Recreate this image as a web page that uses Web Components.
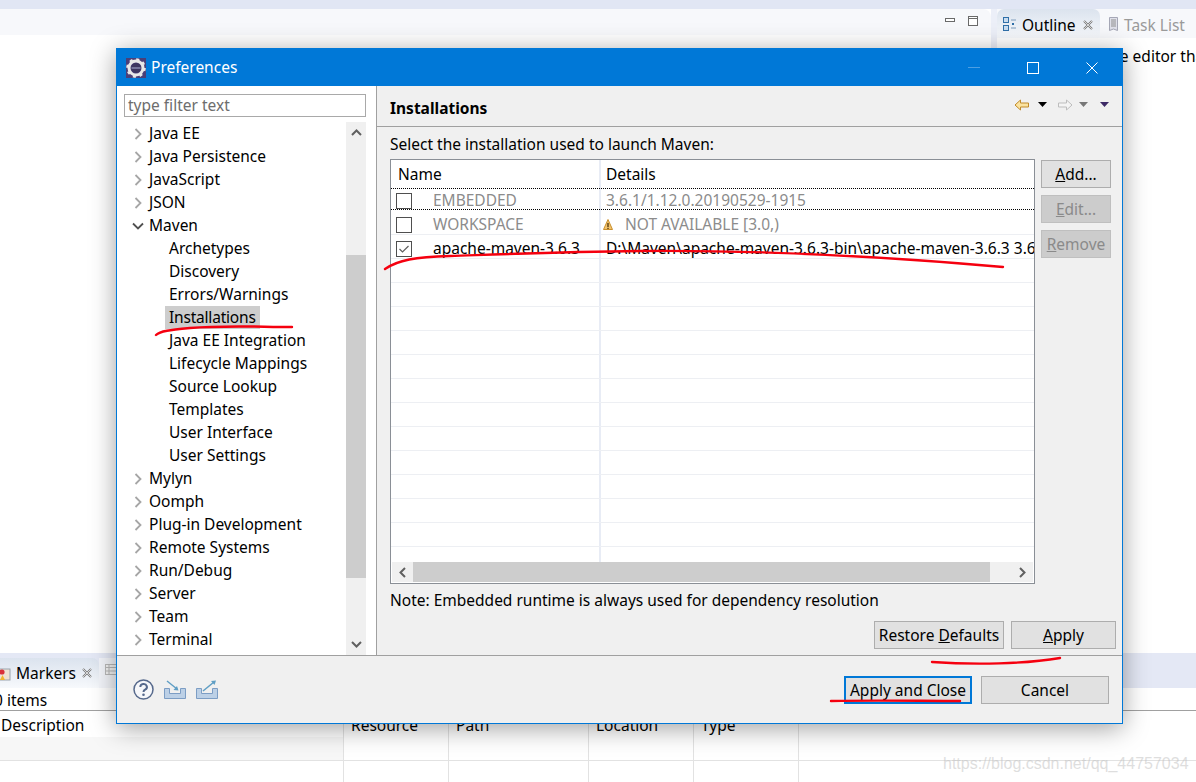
<!DOCTYPE html>
<html>
<head>
<meta charset="utf-8">
<title>Preferences</title>
<style>
  html, body { margin: 0; height: 100%; overflow: hidden; background: #fff; }
  body { font-family: "Noto Sans", "Open Sans", sans-serif; font-size: 15.5px; color: #000; }
</style>
</head>
<body>

<work-bench>
  <pref-dialog>
    <tree-item slot="tree" kind="closed">Java EE</tree-item>
    <tree-item slot="tree" kind="closed">Java Persistence</tree-item>
    <tree-item slot="tree" kind="closed">JavaScript</tree-item>
    <tree-item slot="tree" kind="closed">JSON</tree-item>
    <tree-item slot="tree" kind="open">Maven</tree-item>
    <tree-item slot="tree" kind="child">Archetypes</tree-item>
    <tree-item slot="tree" kind="child">Discovery</tree-item>
    <tree-item slot="tree" kind="child">Errors/Warnings</tree-item>
    <tree-item slot="tree" kind="child" selected>Installations</tree-item>
    <tree-item slot="tree" kind="child">Java EE Integration</tree-item>
    <tree-item slot="tree" kind="child">Lifecycle Mappings</tree-item>
    <tree-item slot="tree" kind="child">Source Lookup</tree-item>
    <tree-item slot="tree" kind="child">Templates</tree-item>
    <tree-item slot="tree" kind="child">User Interface</tree-item>
    <tree-item slot="tree" kind="child">User Settings</tree-item>
    <tree-item slot="tree" kind="closed">Mylyn</tree-item>
    <tree-item slot="tree" kind="closed">Oomph</tree-item>
    <tree-item slot="tree" kind="closed">Plug-in Development</tree-item>
    <tree-item slot="tree" kind="closed">Remote Systems</tree-item>
    <tree-item slot="tree" kind="closed">Run/Debug</tree-item>
    <tree-item slot="tree" kind="closed">Server</tree-item>
    <tree-item slot="tree" kind="closed">Team</tree-item>
    <tree-item slot="tree" kind="closed">Terminal</tree-item>

    <install-table slot="table"></install-table>

    <swt-button slot="side"><u>A</u>dd...</swt-button>
    <swt-button slot="side" disabled><u>E</u>dit...</swt-button>
    <swt-button slot="side" disabled><u>R</u>emove</swt-button>

    <swt-button slot="restore" style="width:130px">Restore <u>D</u>efaults</swt-button>
    <swt-button slot="restore" style="width:105px"><u>A</u>pply</swt-button>

    <swt-button slot="footer" style="width:128px" focused>Apply and Close</swt-button>
    <swt-button slot="footer" style="width:128px">Cancel</swt-button>
  </pref-dialog>
</work-bench>

<script>
class WorkBench extends HTMLElement {
    constructor() {
        super();
        this.attachShadow({ mode: 'open' });
        this.shadowRoot.innerHTML = `
        <style>
          :host { display: block; position: relative; width: 1196px; height: 782px; overflow: hidden; background: #fff; }
          .page { display: flex; flex-direction: column; height: 100%; }
          .band { height: 9px; background: #e1e6f4; flex: none; }
          .upper { flex: 1; display: flex; min-height: 0; background: #fff; }
          .editor { width: 991px; flex: none; }
          .editor-bar { height: 26px; background: #f7f8fb; border-radius: 0 8px 0 0; display: flex; justify-content: flex-end; align-items: center; gap: 12px; padding: 0 12px 2px 0; box-sizing: border-box; }
          .gutter { width: 6px; flex: none; background: #eceff8; height: 100%; }
          .outline { flex: 1; min-width: 0; }
          .tabs { height: 29px; display: flex; background: #f7f8fb; }
          .tab { display: flex; align-items: center; gap: 5px; padding: 2px 7px 0 6px; white-space: nowrap; }
          .tab.on { background: linear-gradient(#dbe3ee, #f7f9fc); border-radius: 7px 7px 0 0; width: 103px; box-sizing: border-box; flex: none; }
          .tab.off { color: #9a9a9a; padding-left: 8px; }
          .msg { padding: 7px 0 0 5px; white-space: nowrap; overflow: hidden; }
          .lower { height: 129px; flex: none; background: #fff; }
          .low-tabs { height: 35px; box-sizing: border-box; padding-top: 5px; display: flex; background: #e4e8f5; }
          .low-tab { width: 99px; background: linear-gradient(#dbe3ee, #f7f9fc); border-radius: 0 7px 0 0; display: flex; align-items: center; gap: 5px; box-sizing: border-box; }
          .low-other { width: 40px; padding: 6px 0 0 6px; background: #f3f5fa; }
          .count { height: 23px; line-height: 25px; box-sizing: border-box; border-bottom: 1px solid #a0a0a0; white-space: nowrap; overflow: hidden; margin-left: -6px; }
          .cols { display: grid; grid-template-columns: 344px 105px 140px 105px 105px 1fr; }
          .cols div { height: 26px; line-height: 29px; border-right: 1px solid #e2e2e2; padding-left: 7px; box-sizing: border-box; }
          .cols .row { height: 24px; background: #fff; border-bottom: 1px solid #e2e2e2; }
          .cols .tail { height: 22px; border-bottom: 0; }
          .cols .first { padding-left: 1px; }
          .cols .grey { background: #f7f7f7; }
          .wm { position: absolute; left: 943px; top: 755px; font: 16px "Liberation Sans", sans-serif; color: rgba(190,190,190,.5); white-space: nowrap; }
          .dlg { position: absolute; left: 116px; top: 48px; }
          svg { display: block; flex: none; }
        </style>
        <div class="page">
          <div class="band"></div>
          <div class="upper">
            <div class="editor">
              <div class="editor-bar">
                <svg width="11" height="10" viewBox="0 0 11 10"><rect x="0.5" y="2.5" width="9" height="3" fill="#fff" stroke="#6a6a6a"/></svg>
                <svg width="11" height="11" viewBox="0 0 11 11"><rect x="0.5" y="0.5" width="9" height="9" fill="#fff" stroke="#6a6a6a"/><path d="M0 2.5h10" stroke="#6a6a6a"/></svg>
              </div>
            </div>
            <div class="gutter"></div>
            <div class="outline">
              <div class="tabs">
                <div class="tab on">
                  <svg width="14" height="15" viewBox="0 0 14 15" fill="none"><rect x="0.5" y="0.5" width="5" height="5" fill="#c9dcef" stroke="#2f6fa8"/><rect x="0.500" y="8.500" width="5" height="5" fill="#c9dcef" stroke="#2f6fa8"/><path d="M8 3h5M8 11h5" stroke="#7c9cbc"/><rect x="9" y="6" width="2" height="2" fill="#2f6fa8"/></svg>
                  <span>Outline</span>
                  <svg width="10" height="10" viewBox="0 0 10 10" style="margin-left:2px"><path d="M1 1l8 8M9 1l-8 8" stroke="#777" stroke-width="2"/><path d="M1 1l8 8M9 1l-8 8" stroke="#fff" stroke-width=".7"/></svg>
                </div>
                <div class="tab off">
                  <svg width="11" height="15" viewBox="0 0 11 15"><path d="M1.500 .5h8v13l-4-1.500-4 1.500z" fill="#dfe0ea" stroke="#a5a7b6"/><path d="M3 3h5M3 5h5M3 7h5M3 9h5" stroke="#8f8f8f"/></svg>
                  <span>Task List</span>
                </div>
              </div>
              <div class="msg">There is no active editor that provides an outline.</div>
            </div>
          </div>
          <div class="lower">
            <div class="low-tabs">
              <div class="low-tab">
                <svg width="11" height="15" viewBox="0 0 11 15"><rect x="-1" y="3" width="11" height="11" fill="#efe3d3" stroke="#9aa3ad"/><circle cx="2" cy="6" r="2.600" fill="#d9323a"/><path d="M0 14l2.500-5 2.500 5z" fill="#f2b632"/></svg>
                <span>Markers</span>
                <svg width="10" height="10" viewBox="0 0 10 10" style="margin-left:1px"><path d="M1 1l8 8M9 1l-8 8" stroke="#777" stroke-width="2"/><path d="M1 1l8 8M9 1l-8 8" stroke="#fff" stroke-width=".7"/></svg>
              </div>
              <div class="low-other"><svg width="12" height="11" viewBox="0 0 12 11"><rect x=".5" y=".5" width="11" height="10" fill="#f4f4f4" stroke="#b9b9b9"/><path d="M0 3.500h12M0 7h12M4 0v11" stroke="#b9b9b9"/></svg></div>
            </div>
            <div class="count">0 items</div>
            <div class="cols">
              <div class="first">Description</div><div>Resource</div><div>Path</div><div>Location</div><div>Type</div><div style="border-right:0"></div>
              <div class="row grey"></div><div class="row"></div><div class="row"></div><div class="row"></div><div class="row"></div><div class="row" style="border-right:0"></div>
              <div class="row tail"></div><div class="row tail"></div><div class="row tail"></div><div class="row tail"></div><div class="row tail"></div><div class="row tail" style="border-right:0"></div>
            </div>
          </div>
        </div>
        <div class="dlg"><slot></slot></div>
        <div class="wm">https://blog.csdn.net/qq_44757034</div>
        `;
    }
}

class PrefDialog extends HTMLElement {
    constructor() {
        super();
        this.attachShadow({ mode: 'open' });
        this.shadowRoot.innerHTML = `
        <style>
          :host { display: block; position: relative; width: 1007px; height: 676px; box-sizing: border-box; border: 1px solid #0078d7; background: #f0f0f0; box-shadow: 0 4px 24px rgba(0,0,0,.38); }
          .frame { display: flex; flex-direction: column; height: 100%; }
          .title { height: 37px; flex: none; background: #0078d7; color: #fff; display: flex; align-items: center; padding-left: 9px; gap: 5px; }
          .title span { flex: 1; margin-top: -2px; }
          .wbtns { display: flex; height: 100%; margin-right: 1px; }
          .wbtns div { width: 59px; display: flex; align-items: center; justify-content: center; }
          .main { flex: 1; display: flex; min-height: 0; }
          .left { width: 259px; flex: none; background: #fff; border-right: 1px solid #a0a0a0; display: flex; flex-direction: column; }
          .filter { height: 23px; margin: 8px 10px 5px 7px; flex: none; box-sizing: border-box; border: 1px solid #a9a9a9; padding-left: 3px; line-height: 21px; color: #6d6d6d; }
          .tree-wrap { flex: 1; display: flex; min-height: 0; padding-right: 10px; }
          .tree { flex: 1; min-width: 0; overflow: hidden; }
          .vbar { width: 20px; flex: none; background: #f0f0f0; display: flex; flex-direction: column; align-items: center; }
          .vbar .thumb { width: 100%; height: 323px; background: #cdcdcd; margin: 112px 0 0; }
          .vbar .up { height: 21px; display: flex; align-items: center; justify-content: center; }
          .vbar .down { margin-top: auto; height: 22px; display: flex; align-items: center; justify-content: center; }
          .right { flex: 1; min-width: 0; display: flex; flex-direction: column; }
          .head { height: 41px; flex: none; border-bottom: 1px solid #a0a0a0; box-sizing: border-box; display: flex; align-items: center; padding: 3px 12px 0 13px; }
          .head b { flex: 1; font-weight: 700; }
          .nav { display: flex; align-items: center; margin-top: -6px; }
          .content { flex: 1; padding: 5px 6px 6px 13px; display: flex; flex-direction: column; min-height: 0; }
          .label { height: 27px; line-height: 25px; flex: none; }
          .tbl { display: flex; gap: 6px; height: 425px; flex: none; }
          .side { display: flex; flex-direction: column; gap: 7px; width: 70px; padding-top: 1px; }
          ::slotted(swt-button[slot=side]) { width: 70px; }
          .note { height: 33px; line-height: 32px; flex: none; }
          .restore { display: flex; justify-content: flex-end; gap: 7px; margin-top: 4px; }
          .foot { height: 68px; flex: none; border-top: 1px solid #a0a0a0; box-sizing: border-box; display: flex; align-items: flex-start; padding: 20px 13px 0 16px; }
          .icons { display: flex; gap: 10px; align-items: center; flex: 1; margin-top: 3px; }
          .foot-btns { display: flex; gap: 9px; }
          .ink { position: absolute; left: -117px; top: -49px; width: 1196px; height: 782px; pointer-events: none; overflow: visible; }
          svg { display: block; flex: none; }
        </style>
        <div class="frame">
          <div class="title">
            <svg width="20" height="20" viewBox="0 0 20 20">
              <rect width="20" height="20" fill="#4a3f78"/>
              <circle cx="10" cy="10" r="7" fill="none" stroke="#e8e8e8" stroke-width="3"/>
              <circle cx="10" cy="10" r="8.600" fill="none" stroke="#e8e8e8" stroke-width="2.400" stroke-dasharray="3 3.750"/>
              <circle cx="10" cy="10" r="5" fill="#3e3560"/>
              <path d="M5.500 10h9" stroke="#8f8fb5" stroke-width="1.400"/>
            </svg>
            <span>Preferences</span>
            <div class="wbtns">
              <div><svg width="12" height="2"><rect width="12" height="1" fill="#4d9fe3"/></svg></div>
              <div><svg width="12" height="12"><rect x=".5" y=".5" width="11" height="11" fill="none" stroke="#fff"/></svg></div>
              <div><svg width="12" height="12"><path d="M.5.5l11 11M11.500.5l-11 11" stroke="#fff" fill="none"/></svg></div>
            </div>
          </div>
          <div class="main">
            <div class="left">
              <div class="filter">type filter text</div>
              <div class="tree-wrap">
                <div class="tree"><slot name="tree"></slot></div>
                <div class="vbar">
                  <div class="up"><svg width="11" height="7" viewBox="0 0 11 7"><path d="M1 6l4.500-4.500L10 6" fill="none" stroke="#606060" stroke-width="2"/></svg></div>
                  <div class="thumb"></div>
                  <div class="down"><svg width="11" height="7" viewBox="0 0 11 7"><path d="M1 1l4.500 4.500L10 1" fill="none" stroke="#606060" stroke-width="2"/></svg></div>
                </div>
              </div>
            </div>
            <div class="right">
              <div class="head">
                <b>Installations</b>
                <div class="nav">
                  <svg width="16" height="12" viewBox="0 0 16 12"><path d="M1 6l5.500-5v3h8v4h-8v3z" fill="#fbe3a0" stroke="#c08a2a"/></svg>
                  <svg width="10" height="5" viewBox="0 0 10 5" style="margin-left:8px"><path d="M0 0h9L4.500 5z" fill="#000"/></svg>
                  <svg width="16" height="12" viewBox="0 0 16 12" style="margin-left:9px"><path d="M15 6L9.500 1v3h-8v4h8v3z" fill="#f4f4f4" stroke="#bdbdbd"/></svg>
                  <svg width="10" height="5" viewBox="0 0 10 5" style="margin-left:6px"><path d="M0 0h9L4.500 5z" fill="#777"/></svg>
                  <svg width="10" height="5" viewBox="0 0 10 5" style="margin-left:11px"><path d="M0 0h9L4.500 5z" fill="#3d2a66"/></svg>
                </div>
              </div>
              <div class="content">
                <div class="label">Select the installation used to launch Maven:</div>
                <div class="tbl">
                  <slot name="table"></slot>
                  <div class="side"><slot name="side"></slot></div>
                </div>
                <div class="note">Note: Embedded runtime is always used for dependency resolution</div>
                <div class="restore"><slot name="restore"></slot></div>
              </div>
            </div>
          </div>
          <div class="foot">
            <div class="icons">
              <svg width="21" height="21" viewBox="0 0 21 21"><circle cx="10.500" cy="10.500" r="9.500" fill="#f6f7fa" stroke="#56698c" stroke-width="1.500"/><path d="M7.300 8a3.300 3 0 1 1 4.800 2.700c-1.100.6-1.600 1.100-1.600 2.300" fill="none" stroke="#56698c" stroke-width="2"/><circle cx="10.500" cy="15.800" r="1.300" fill="#56698c"/></svg>
              <svg width="22" height="19" viewBox="0 0 22 19"><path d="M.5 8.500h5v5h11v-5h5v10H.5z" fill="#bcd0e6" stroke="#7c9dc4"/><path d="M3 1l10 8" stroke="#5f9ec4" stroke-width="1.500"/><path d="M14.500 10.500l-5-.5 3.500-4z" fill="#5f9ec4"/></svg>
              <svg width="22" height="19" viewBox="0 0 22 19"><path d="M.5 8.500h5v5h11v-5h5v10H.5z" fill="#bcd0e6" stroke="#7c9dc4"/><path d="M7 11L18 2" stroke="#5f9ec4" stroke-width="1.500"/><path d="M20 .5l-5 .5 3.500 4z" fill="#5f9ec4"/></svg>
            </div>
            <div class="foot-btns"><slot name="footer"></slot></div>
          </div>
        </div>
        <svg class="ink" viewBox="0 0 1196 782" fill="none" stroke="#f5000f" stroke-linecap="round">
          <path d="M385 269C398 260 415 257 450 256 510 254 560 252 640 251 760 250 880 256 1003 267" stroke-width="2.400"/>
          <path d="M156 335C160 331 170 330 190 328 225 325 260 327 292 327" stroke-width="2.400"/>
          <path d="M932 662C975 665 1025 664 1060 658" stroke-width="2.400"/>
          <path d="M831 701C880 700 920 701 960 701" stroke-width="2.400"/>
        </svg>
        `;
    }
}

class TreeItem extends HTMLElement {
    constructor() {
        super();
        this.attachShadow({ mode: 'open' });
    }
    connectedCallback() {
        const kind = this.getAttribute('kind');
        let arrow = '';
        if (kind === 'closed') {
            arrow = '<svg width="8" height="12" viewBox="0 0 8 12"><path d="M1.500 1l5 5-5 5" fill="none" stroke="#a6a6a6" stroke-width="1.800"/></svg>';
        } else if (kind === 'open') {
            arrow = '<svg width="12" height="8" viewBox="0 0 12 8"><path d="M1 1.500l5 5 5-5" fill="none" stroke="#505050" stroke-width="1.800"/></svg>';
        }
        this.shadowRoot.innerHTML = `
        <style>
          :host { display: block; height: 23px; line-height: 23px; white-space: nowrap; }
          .row { display: flex; align-items: center; height: 100%; padding-left: ${kind === 'child' ? '52' : '10'}px; }
          .arrow { width: 22px; flex: none; display: flex; justify-content: center; }
          .text { padding: 0 4px; margin-left: -4px; }
          :host([selected]) .text { background: #cdcdcd; letter-spacing: -.2px; }
        </style>
        <div class="row">
          ${kind === 'child' ? '' : `<span class="arrow">${arrow}</span>`}
          <span class="text"><slot></slot></span>
        </div>
        `;
    }
}

class InstallTable extends HTMLElement {
    constructor() {
        super();
        this.attachShadow({ mode: 'open' });
        const rows = [
            { name: 'EMBEDDED', det: '3.6.1/1.12.0.20190529-1915', grey: true, dotted: true },
            { name: 'WORKSPACE', det: 'NOT AVAILABLE [3.0,)', grey: true, warn: true },
            { name: 'apache-maven-3.6.3', det: 'D:\\Maven\\apache-maven-3.6.3-bin\\apache-maven-3.6.3 3.6.3', checked: true }
        ];
        let body = '';
        for (const r of rows) {
            const box = r.checked
                ? '<svg width="16" height="16" viewBox="0 0 16 16"><rect x=".5" y=".5" width="15" height="15" fill="#fff" stroke="#4f4f4f"/><path d="M3.500 8l3 3 6-6" fill="none" stroke="#5f5f5f" stroke-width="1.200"/></svg>'
                : '<svg width="16" height="16" viewBox="0 0 16 16"><rect x=".5" y=".5" width="15" height="15" fill="#fff" stroke="#4f4f4f"/></svg>';
            const warn = r.warn
                ? '<svg class="warn" width="10" height="12" viewBox="0 0 10 12"><path d="M5 .5L9.500 10.500H.5z" fill="#f2c36d" stroke="#c98f2d"/><rect x="4.300" y="4" width="1.400" height="4" fill="#5a3d10"/><rect x="4.300" y="8.800" width="1.400" height="1.200" fill="#5a3d10"/></svg>'
                : '';
            body += `<div class="row ${r.grey ? 'grey' : ''} ${r.dotted ? 'dotted' : ''}">
              <div class="c1">${box}<span>${r.name}</span></div>
              <div class="c2">${warn}<span>${r.det}</span></div>
            </div>`;
        }
        for (let i = 0; i < 13; i++) {
            body += '<div class="row"><div class="c1"></div><div class="c2"></div></div>';
        }
        this.shadowRoot.innerHTML = `
        <style>
          :host { display: flex; flex-direction: column; width: 645px; height: 425px; box-sizing: border-box; border: 1px solid #8a8f96; background: #fff; flex: none; overflow: hidden; }
          .cols { display: grid; grid-template-columns: 210px 1fr; height: 27px; flex: none; line-height: 28px; }
          .cols div:first-child { padding-left: 7px; border-right: 2px solid #e8ecf5; }
          .cols div:last-child { padding-left: 5px; }
          .body { flex: 1; min-height: 0; overflow: hidden; }
          .row { position: relative; display: grid; grid-template-columns: 210px 1fr; height: 24px; box-sizing: border-box; border-bottom: 1px solid #edeff3; line-height: 23px; white-space: nowrap; }
          .row.grey { color: #8c8c8c; }
          .row.dotted { border-bottom-color: transparent; }
          .row.dotted::after { content: ""; position: absolute; left: 0; right: 0; top: 1px; bottom: 0; border-top: 1px dotted #000; border-bottom: 1px dotted #000; }
          .c1 { display: flex; align-items: center; padding: 2px 0 0 5px; border-right: 2px solid #e8ecf5; box-sizing: border-box; }
          .c1 span { margin-left: 21px; }
          .c2 { display: flex; align-items: center; padding: 2px 0 0 5px; overflow: hidden; }
          .warn { margin: 0 12px 0 -3px; flex: none; }
          .hbar { height: 20px; flex: none; background: #f0f0f0; display: flex; align-items: center; margin: 0 1px 1px; }
          .hbar .a { width: 21px; display: flex; justify-content: center; flex: none; }
          .hbar .t { height: 100%; background: #cdcdcd; width: 577px; flex: none; }
          .hbar .e { flex: 1; display: flex; justify-content: flex-end; padding-right: 7px; }
          svg { display: block; flex: none; }
        </style>
        <div class="cols"><div>Name</div><div>Details</div></div>
        <div class="body">${body}</div>
        <div class="hbar">
          <div class="a"><svg width="7" height="11" viewBox="0 0 7 11"><path d="M6 1L1.500 5.500 6 10" fill="none" stroke="#606060" stroke-width="2"/></svg></div>
          <div class="t"></div>
          <div class="e"><svg width="7" height="11" viewBox="0 0 7 11"><path d="M1 1l4.500 4.500L1 10" fill="none" stroke="#606060" stroke-width="2"/></svg></div>
        </div>
        `;
    }
}

class SwtButton extends HTMLElement {
    constructor() {
        super();
        this.attachShadow({ mode: 'open' });
        this.shadowRoot.innerHTML = `
        <style>
          :host { display: block; height: 28px; flex: none; box-sizing: border-box; border: 1px solid #adadad; background: #e1e1e1; text-align: center; line-height: 27px; white-space: nowrap; }
          :host([disabled]) { background: #cccccc; border-color: #bfbfbf; color: #8a8a8a; }
          :host([focused]) { border: 2px solid #0078d7; line-height: 25px; }
        </style>
        <slot></slot>
        `;
    }
}

window.customElements.define('work-bench', WorkBench);
window.customElements.define('pref-dialog', PrefDialog);
window.customElements.define('tree-item', TreeItem);
window.customElements.define('install-table', InstallTable);
window.customElements.define('swt-button', SwtButton);
</script>
</body>
</html>
